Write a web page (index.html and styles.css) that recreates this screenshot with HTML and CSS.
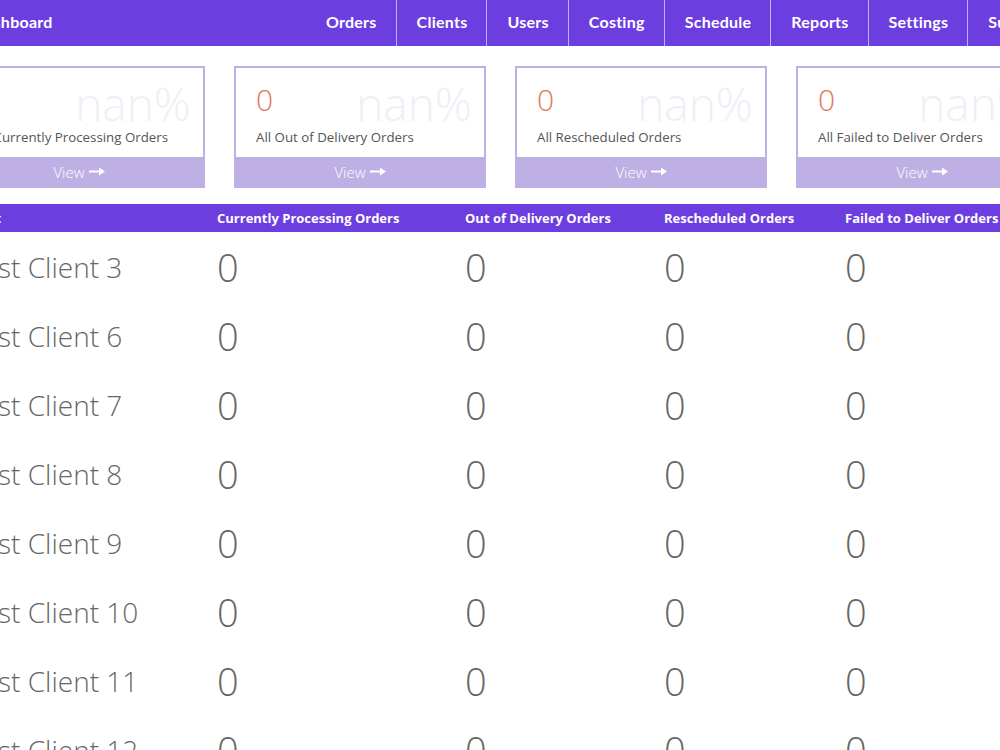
FILE: index.html
```html
<!DOCTYPE html>
<html lang="en">
<head>
    <meta charset="UTF-8">
    <meta name="viewport" content="width=device-width, initial-scale=1.0">
    <link rel="stylesheet" href="styles.css">
    <title>Dashboard</title>
</head>
<body>
    <div class="page">
        <nav class="topbar">
            <a class="brand" href="#">Dashboard</a>
            <ul class="menu">
                <li><a href="#">Orders</a></li>
                <li><a href="#">Clients</a></li>
                <li><a href="#">Users</a></li>
                <li><a href="#">Costing</a></li>
                <li><a href="#">Schedule</a></li>
                <li><a href="#">Reports</a></li>
                <li><a href="#">Settings</a></li>
                <li><a href="#">Support</a></li>
            </ul>
        </nav>

        <div class="cards">
            <div class="card">
                <div class="card-body">
                    <div class="card-top">
                        <span class="count">0</span>
                        <span class="percent">nan%</span>
                    </div>
                    <div class="label">All Currently Processing Orders</div>
                </div>
                <a class="view" href="#">View <svg width="16" height="9" viewBox="0 0 16 9"><path d="M0 4.5h12" stroke="#fff" stroke-width="2"/><path d="M10 0.5l6 4-6 4z" fill="#fff"/></svg></a>
            </div>
            <div class="card">
                <div class="card-body">
                    <div class="card-top">
                        <span class="count">0</span>
                        <span class="percent">nan%</span>
                    </div>
                    <div class="label">All Out of Delivery Orders</div>
                </div>
                <a class="view" href="#">View <svg width="16" height="9" viewBox="0 0 16 9"><path d="M0 4.5h12" stroke="#fff" stroke-width="2"/><path d="M10 0.5l6 4-6 4z" fill="#fff"/></svg></a>
            </div>
            <div class="card">
                <div class="card-body">
                    <div class="card-top">
                        <span class="count">0</span>
                        <span class="percent">nan%</span>
                    </div>
                    <div class="label">All Rescheduled Orders</div>
                </div>
                <a class="view" href="#">View <svg width="16" height="9" viewBox="0 0 16 9"><path d="M0 4.5h12" stroke="#fff" stroke-width="2"/><path d="M10 0.5l6 4-6 4z" fill="#fff"/></svg></a>
            </div>
            <div class="card">
                <div class="card-body">
                    <div class="card-top">
                        <span class="count">0</span>
                        <span class="percent">nan%</span>
                    </div>
                    <div class="label">All Failed to Deliver Orders</div>
                </div>
                <a class="view" href="#">View <svg width="16" height="9" viewBox="0 0 16 9"><path d="M0 4.5h12" stroke="#fff" stroke-width="2"/><path d="M10 0.5l6 4-6 4z" fill="#fff"/></svg></a>
            </div>
        </div>

        <div class="summary">
            <div class="row head">
                <div class="cell first">Client</div>
                <div class="cell">Currently Processing Orders</div>
                <div class="cell">Out of Delivery Orders</div>
                <div class="cell">Rescheduled Orders</div>
                <div class="cell">Failed to Deliver Orders</div>
            </div>
            <div class="row"><div class="cell first">Test Client 3</div><div class="cell">0</div><div class="cell">0</div><div class="cell">0</div><div class="cell">0</div></div>
            <div class="row"><div class="cell first">Test Client 6</div><div class="cell">0</div><div class="cell">0</div><div class="cell">0</div><div class="cell">0</div></div>
            <div class="row"><div class="cell first">Test Client 7</div><div class="cell">0</div><div class="cell">0</div><div class="cell">0</div><div class="cell">0</div></div>
            <div class="row"><div class="cell first">Test Client 8</div><div class="cell">0</div><div class="cell">0</div><div class="cell">0</div><div class="cell">0</div></div>
            <div class="row"><div class="cell first">Test Client 9</div><div class="cell">0</div><div class="cell">0</div><div class="cell">0</div><div class="cell">0</div></div>
            <div class="row"><div class="cell first">Test Client 10</div><div class="cell">0</div><div class="cell">0</div><div class="cell">0</div><div class="cell">0</div></div>
            <div class="row"><div class="cell first">Test Client 11</div><div class="cell">0</div><div class="cell">0</div><div class="cell">0</div><div class="cell">0</div></div>
            <div class="row"><div class="cell first">Test Client 12</div><div class="cell">0</div><div class="cell">0</div><div class="cell">0</div><div class="cell">0</div></div>
        </div>
    </div>
</body>
</html>
```

FILE: styles.css
```css
*{
    box-sizing: border-box;
}
html, body{
    overflow: hidden;
}
body{
    margin: 0;
    font-family: "Open Sans", "Liberation Sans", sans-serif;
    color: #555;
    background: #fff;
}
a{
    text-decoration: none;
}
.page{
    width: 1113px;
    margin-left: -47px;
}

/* top navigation */
.topbar{
    display: flex;
    height: 46px;
    background: #6c3ee0;
    padding-left: 20px;
}
.brand, .menu a{
    font-family: Lato, "Liberation Sans", sans-serif;
    font-weight: 700;
    font-size: 16px;
    letter-spacing: 0.25px;
    color: #fff;
    line-height: 43px;
}
.menu{
    display: flex;
    list-style: none;
    margin: 0 0 0 auto;
    padding: 0;
}
.menu li + li{
    border-left: 1px solid rgba(255,255,255,0.6);
}
.menu a{
    display: block;
    height: 46px;
    padding: 0 19px 0 20px;
}

/* stat cards */
.cards{
    display: grid;
    grid-template-columns: repeat(4, 252px);
    gap: 29px;
    margin-top: 20px;
}
.card{
    border: 2px solid #beb0e4;
    border-bottom: none;
}
.card-body{
    height: 89px;
    padding: 14px 12px 0 20px;
}
.card-top{
    display: flex;
    justify-content: space-between;
    align-items: center;
    height: 42px;
}
.count{
    font-size: 30px;
    font-weight: 300;
    color: #e0775b;
    padding-bottom: 8px;
}
.percent{
    font-size: 46px;
    font-weight: 300;
    color: #edf0f6;
}
.label{
    font-size: 13.3px;
    line-height: 20px;
    margin-top: 3px;
    color: #555;
    white-space: nowrap;
}
.view{
    display: flex;
    justify-content: center;
    align-items: center;
    gap: 4px;
    height: 31px;
    padding-bottom: 2px;
    background: #beb0e4;
    color: #fff;
    font-size: 15px;
    font-weight: 300;
}

/* client table */
.summary{
    margin-top: 16px;
}
.row{
    display: grid;
    grid-template-columns: 244px 248px 199px 181px 241px;
    height: 69px;
    align-items: center;
    font-size: 38px;
    font-weight: 300;
    color: #666;
}
.row.head{
    height: 28px;
    background: #6c3ee0;
    color: #fff;
    font-size: 13px;
    font-weight: 700;
}
.cell{
    padding-left: 20px;
    white-space: nowrap;
}
.cell.first{
    padding-left: 15px;
}
.row .first{
    font-size: 28px;
}
.row.head .first{
    font-size: 13px;
    padding-left: 10px;
}
```
